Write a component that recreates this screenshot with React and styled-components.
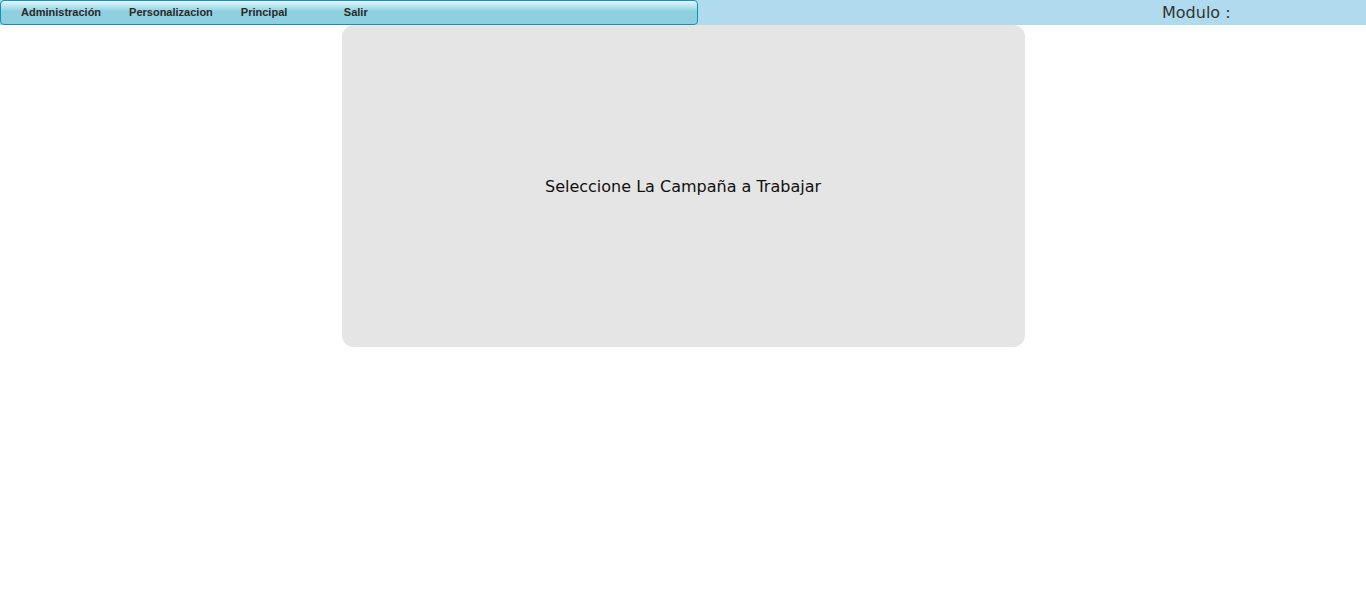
import styled, { createGlobalStyle } from 'styled-components';

const GlobalStyle = createGlobalStyle`
  body {
    margin: 0;
    background: #ffffff;
    font-family: 'DejaVu Sans', Verdana, sans-serif;
  }
`;

const TopBar = styled.div`
  display: flex;
  align-items: stretch;
  height: 25px;
  background: #b0daed;
`;

const MenuBox = styled.nav`
  box-sizing: border-box;
  width: 698px;
  height: 25px;
  display: flex;
  align-items: center;
  padding: 0 0 2px 6px;
  border: 1px solid #0b93bd;
  border-radius: 4px;
  background: linear-gradient(
    to bottom,
    #e4f6fa 0%,
    #b4e3ee 25%,
    #8fd0e0 45%,
    #8fd0e0 100%
  );
`;

const MenuItem = styled.a`
  padding: 0 14px;
  min-width: ${(p) => (p.$wide ? '75px' : 'auto')};
  font-family: 'Liberation Sans', Arial, sans-serif;
  font-size: 11px;
  font-weight: bold;
  color: #2a2a2a;
  cursor: pointer;
`;

const Modulo = styled.div`
  margin-left: 464px;
  display: flex;
  align-items: center;
  font-size: 16px;
  color: #333333;
`;

const Content = styled.main`
  display: flex;
  justify-content: center;
`;

const CampaignPanel = styled.section`
  width: 683px;
  height: 322px;
  display: flex;
  align-items: center;
  justify-content: center;
  background: #e5e5e5;
  border-radius: 12px;
  font-size: 16px;
  color: #111111;
`;

export default function App() {
  return (
    <>
      <GlobalStyle />
      <TopBar>
        <MenuBox>
          <MenuItem>Administración</MenuItem>
          <MenuItem>Personalizacion</MenuItem>
          <MenuItem $wide>Principal</MenuItem>
          <MenuItem>Salir</MenuItem>
        </MenuBox>
        <Modulo>Modulo :</Modulo>
      </TopBar>
      <Content>
        <CampaignPanel>Seleccione La Campaña a Trabajar</CampaignPanel>
      </Content>
    </>
  );
}
